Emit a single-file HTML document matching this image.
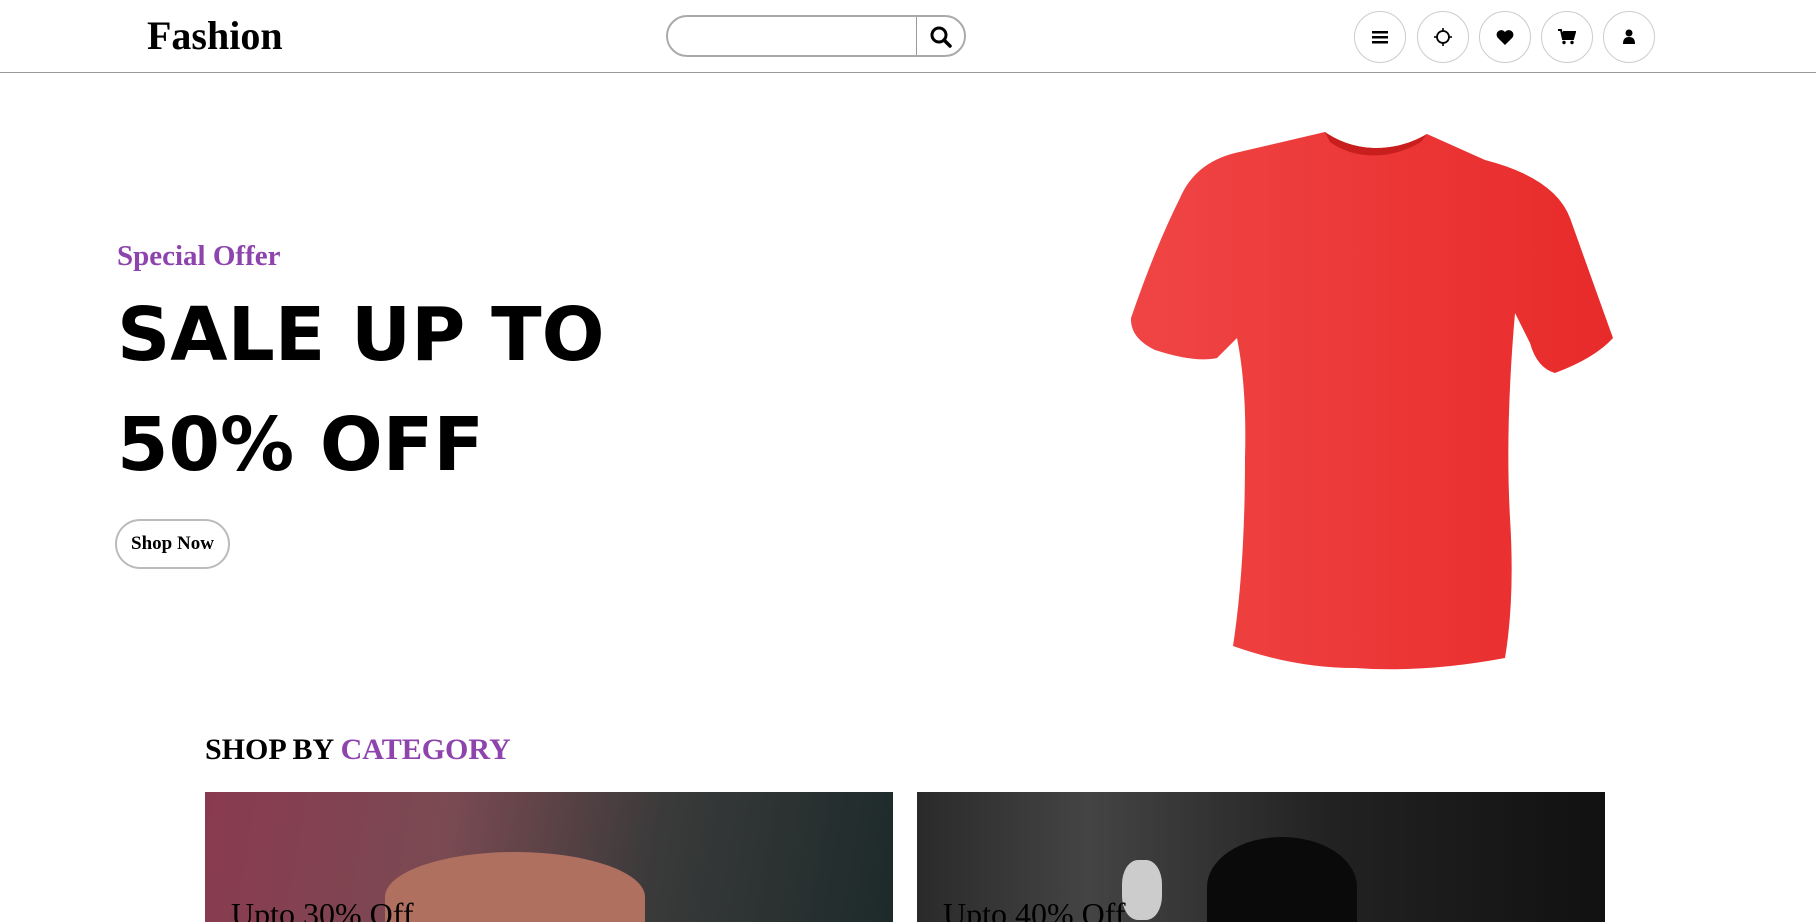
<!DOCTYPE html>
<html><head><meta charset="utf-8"><style>
*{margin:0;padding:0;box-sizing:border-box}
body{width:1816px;height:920px;overflow:hidden;background:#fff;font-family:"Liberation Serif",serif;position:relative}
.hdr{position:absolute;left:0;top:0;width:1816px;height:73px;border-bottom:1.5px solid #999}
.logo{position:absolute;left:147px;top:12px;font-size:40px;font-weight:bold}
.search{position:absolute;left:666px;top:15px;width:300px;height:42px;border:2px solid #aaa;border-radius:21px}
.search .d{position:absolute;left:248px;top:0;width:1px;height:38px;background:#999}
.ic{position:absolute;top:11px;width:52px;height:52px;border:1.5px solid #ccc;border-radius:50%;display:flex;align-items:center;justify-content:center}
.so{position:absolute;left:117px;top:240px;font-size:29px;font-weight:bold;color:#8e44ad}
.big{position:absolute;left:117px;font-family:"Comic Sans MS","DejaVu Sans",sans-serif;font-weight:bold;font-size:74px;letter-spacing:0px}
.btn{position:absolute;left:115px;top:519px;width:115px;height:50px;border:2px solid #bbb;border-radius:25px;font-weight:bold;font-size:19px;display:flex;align-items:center;justify-content:center}
.cat{position:absolute;left:205px;top:733px;font-size:30px;font-weight:bold}
.card{position:absolute;top:792px;width:688px;height:130px;overflow:hidden}
.card span{position:absolute;left:26px;top:104px;font-size:32px}
</style></head><body>
<div class="hdr">
<div class="logo">Fashion</div>
<div class="search"><div class="d"></div>
<svg style="position:absolute;left:262px;top:9px" width="22" height="22" viewBox="0 0 22 22"><circle cx="9" cy="9" r="7" fill="none" stroke="#000" stroke-width="3"/><line x1="14" y1="14" x2="20" y2="20" stroke="#000" stroke-width="3.5" stroke-linecap="round"/></svg></div>
<div class="ic" style="left:1354px"><svg width="16" height="14"><rect y="1" width="16" height="2.5"/><rect y="6" width="16" height="2.5"/><rect y="11" width="16" height="2.5"/></svg></div>
<div class="ic" style="left:1417px"><svg width="20" height="20" viewBox="0 0 20 20"><circle cx="10" cy="10" r="6" fill="none" stroke="#000" stroke-width="1.8"/><g stroke="#000" stroke-width="1.6"><line x1="10" y1="1" x2="10" y2="4"/><line x1="10" y1="16" x2="10" y2="19"/><line x1="1" y1="10" x2="4" y2="10"/><line x1="16" y1="10" x2="19" y2="10"/></g></svg></div>
<div class="ic" style="left:1479px"><svg width="18" height="16" viewBox="0 0 18 16"><path d="M9 16L1.5 8.5A4.3 4.3 0 0 1 9 3a4.3 4.3 0 0 1 7.5 5.5Z"/></svg></div>
<div class="ic" style="left:1541px"><svg width="18" height="16" viewBox="0 0 18 16"><path d="M0 1h3l2 9h10l2-7H5" fill="none" stroke="#000" stroke-width="2"/><rect x="4" y="3" width="12" height="6"/><circle cx="6" cy="13.5" r="1.7"/><circle cx="14" cy="13.5" r="1.7"/></svg></div>
<div class="ic" style="left:1603px"><svg width="14" height="16" viewBox="0 0 14 16"><circle cx="7" cy="4" r="3.5"/><path d="M1 15c0-5 2-7 6-7s6 2 6 7Z"/></svg></div>
</div>
<div class="so">Special Offer</div>
<div class="big" style="top:292px">SALE UP TO</div>
<div class="big" style="top:402px">50% OFF</div>
<div class="btn">Shop Now</div>
<svg style="position:absolute;left:1125px;top:128px" width="492" height="542" viewBox="0 0 492 542">
<defs><linearGradient id="g" x1="0" x2="1"><stop offset="0" stop-color="#f04545"/><stop offset="1" stop-color="#e82a2a"/></linearGradient></defs>
<path d="M200 4 C230 25 270 25 302 6 L360 32 Q430 50 445 90 Q470 160 488 210 Q470 230 430 245 Q412 240 405 215 L390 185 Q380 300 385 390 Q390 470 380 530 Q300 545 230 540 Q170 540 108 518 Q120 440 120 330 Q122 260 112 210 L92 230 Q70 235 30 222 Q5 210 6 190 Q30 120 55 70 Q70 35 110 25 Z" fill="url(#g)"/>
<path d="M200 4 C230 25 270 25 302 6 L296 14 C266 32 230 32 205 14Z" fill="#c81e1e"/>
</svg>
<div class="cat">SHOP BY <span style="color:#8e44ad">CATEGORY</span></div>
<div class="card" style="left:205px;background:linear-gradient(100deg,#8a3a50 0%,#7a4a52 35%,#3a3a3a 65%,#1d2a2a 100%)"><div style="position:absolute;left:180px;top:60px;width:260px;height:90px;background:#b07060;border-radius:50% 50% 0 0"></div><span>Upto 30% Off</span></div>
<div class="card" style="left:917px;background:linear-gradient(90deg,#2a2a2a,#444 25%,#222 60%,#111)"><div style="position:absolute;left:290px;top:45px;width:150px;height:100px;background:#0a0a0a;border-radius:50% 50% 0 0"></div><div style="position:absolute;left:205px;top:68px;width:40px;height:60px;background:#ccc;border-radius:40%"></div><span>Upto 40% Off</span></div>
</body></html>
